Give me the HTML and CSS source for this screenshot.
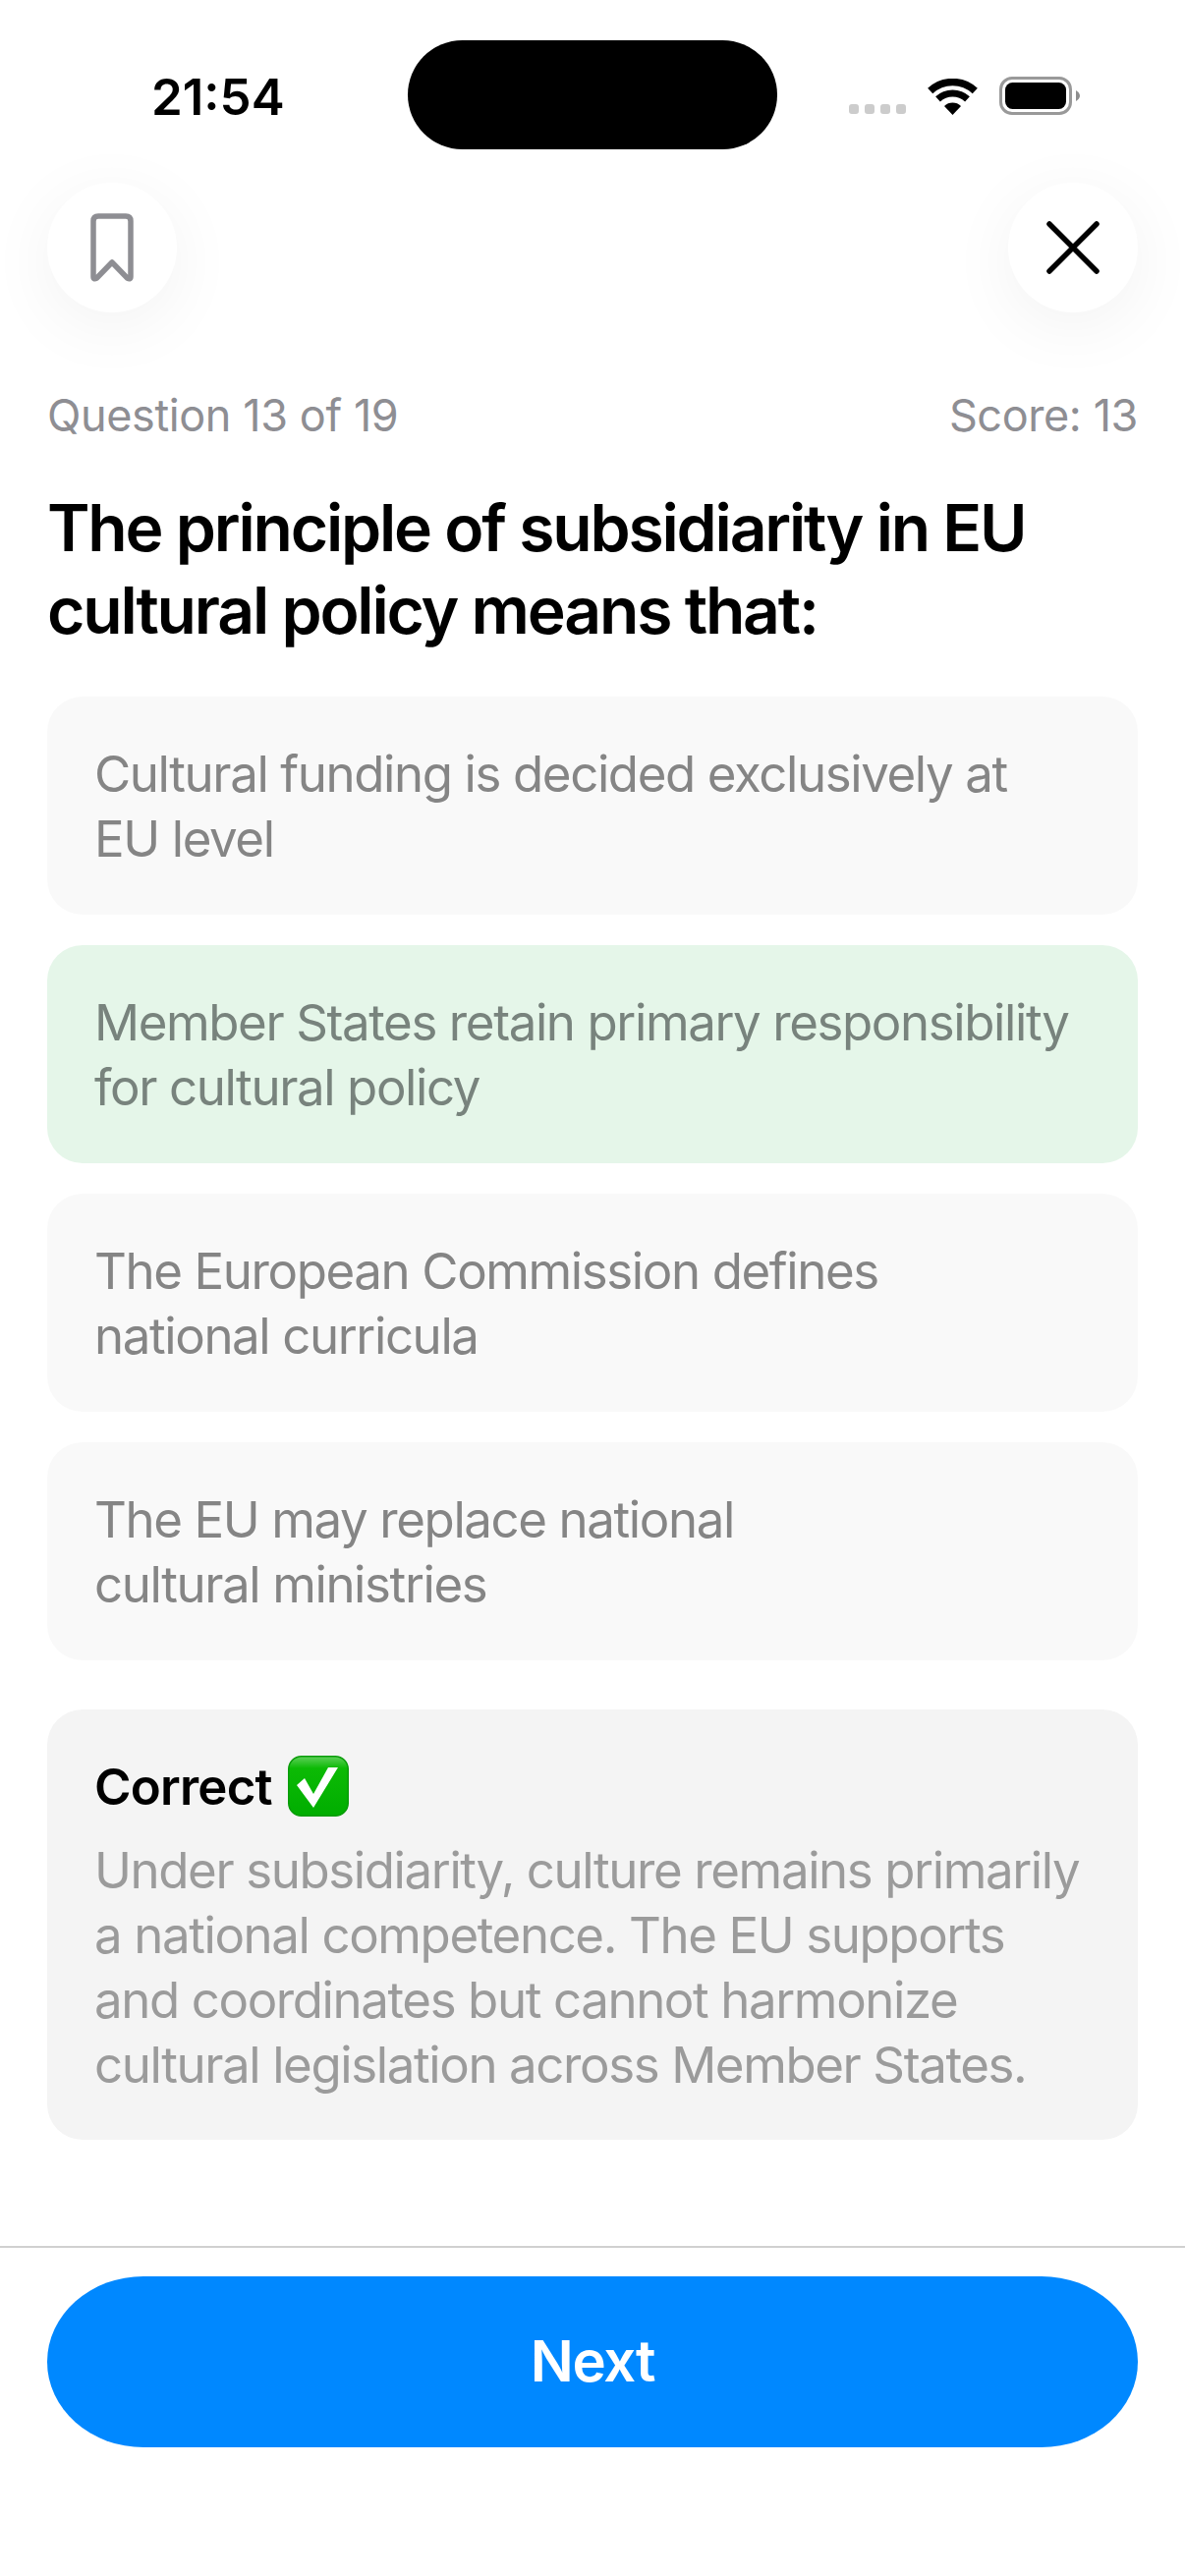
FILE: index.html
```html
<!DOCTYPE html>
<html lang="en">
<head>
    <meta charset="UTF-8">
    <meta name="viewport" content="width=device-width, initial-scale=1.0">
    <title>Quiz</title>
    <link rel="stylesheet" href="styles.css">
</head>
<body>
    <div class="screen">
        <div class="status-bar">
            <span class="time">21:54</span>
            <div class="island"></div>
            <div class="status-icons">
                <div class="signal"><i></i><i></i><i></i><i></i></div>
                <svg class="wifi" width="51" height="37" viewBox="0 0 51 37">
                    <path d="M2.7 12.5A33.5 33.5 0 0 1 48.3 12.5" fill="none" stroke="#000" stroke-width="7.5"/>
                    <path d="M10.500 20.9A22 22 0 0 1 40.500 20.9" fill="none" stroke="#000" stroke-width="7"/>
                    <path d="M25.5 37L17 27.9A12.5 12.5 0 0 1 34 27.9Z" fill="#000"/>
                </svg>
                <svg class="battery" width="82" height="39" viewBox="0 0 82 39">
                    <rect x="1.5" y="1.5" width="71" height="36" rx="11.5" fill="none" stroke="#999" stroke-width="3"/>
                    <rect x="6" y="6" width="62" height="27" rx="7.5" fill="#000"/>
                    <path d="M78 14C80.5 15.500 82 17.500 82 19.500C82 21.500 80.500 23.500 78 25Z" fill="#8e8e8e"/>
                </svg>
            </div>
        </div>

        <div class="top-actions">
            <button class="round-btn">
                <svg width="44" height="70" viewBox="0 0 44 70">
                    <path d="M3 64.5V8Q3 3 8 3H36Q41 3 41 8V64.5Q41 68 37.500 66L22 50L6.500 66Q3 68 3 64.500Z" fill="none" stroke="#8e8e93" stroke-width="5.500" stroke-linejoin="round"/>
                </svg>
            </button>
            <button class="round-btn">
                <svg width="54" height="54" viewBox="0 0 54 54">
                    <path d="M3 3L51 51M51 3L3 51" fill="none" stroke="#000" stroke-width="5.500" stroke-linecap="round"/>
                </svg>
            </button>
        </div>

        <div class="quiz">
            <div class="meta">
                <span>Question 13 of 19</span>
                <span>Score: 13</span>
            </div>
            <h1 class="question">The principle of subsidiarity in EU<br>cultural policy means that:</h1>

            <div class="options">
                <div class="option">Cultural funding is decided exclusively at<br>EU level</div>
                <div class="option correct">Member States retain primary responsibility<br>for cultural policy</div>
                <div class="option">The European Commission defines<br>national curricula</div>
                <div class="option">The EU may replace national<br>cultural ministries</div>
            </div>

            <div class="feedback">
                <div class="feedback-title">
                    Correct
                    <svg width="62" height="62" viewBox="0 0 62 62">
                        <defs>
                            <linearGradient id="emoji-green" x1="0" y1="0" x2="0" y2="1">
                                <stop offset="0" stop-color="#5fd05a"/>
                                <stop offset="0.2" stop-color="#0cba05"/>
                                <stop offset="1" stop-color="#00ad00"/>
                            </linearGradient>
                        </defs>
                        <rect x="0.75" y="0.75" width="60.5" height="60.5" rx="13" fill="url(#emoji-green)" stroke="#0a9c0a" stroke-width="1.5"/>
                        <path d="M9 30L17 23L26 39L41 12H51L26 53Z" fill="#fff"/>
                    </svg>
                </div>
                <p class="feedback-text">Under subsidiarity, culture remains primarily<br>a national competence. The EU supports<br>and coordinates but cannot harmonize<br>cultural legislation across Member States.</p>
            </div>
        </div>

        <div class="footer">
            <button class="next-btn">Next</button>
        </div>
    </div>
</body>
</html>
```

FILE: styles.css
```css
* {
    box-sizing: border-box;
}

body {
    margin: 0;
    padding: 0;
    background: #fff;
    font-family: Inter, "Noto Sans", sans-serif;
}

.screen {
    width: 1206px;
    height: 2622px;
    display: flex;
    flex-direction: column;
    overflow: hidden;
}

/* Status bar */
.status-bar {
    height: 186px;
    display: flex;
    align-items: flex-start;
    padding: 41px 106px 0 154px;
}

.time {
    width: 261px;
    margin-top: 28px;
    font-size: 51px;
    line-height: 60px;
    font-weight: 600;
    color: #000;
}

.island {
    width: 376px;
    height: 111px;
    border-radius: 56px;
    background: #000;
}

.status-icons {
    display: flex;
    align-items: flex-end;
    margin-left: 73px;
    margin-top: 37px;
}

.signal {
    display: flex;
    gap: 6px;
    margin-bottom: 1px;
}

.signal i {
    width: 10px;
    height: 10px;
    border-radius: 3px;
    background: #ccc;
}

.wifi {
    margin-left: 22px;
}

.battery {
    margin-left: 22px;
}

/* Bookmark and close */
.top-actions {
    display: flex;
    justify-content: space-between;
    padding: 0 48px;
}

.round-btn {
    width: 132px;
    height: 132px;
    padding: 0;
    border: none;
    border-radius: 50%;
    background: #fff;
    box-shadow: 0 14px 70px rgba(0, 0, 0, 0.055);
    display: flex;
    justify-content: center;
    align-items: center;
}

.quiz {
    flex: 1;
    padding: 0 48px;
}

.meta {
    display: flex;
    justify-content: space-between;
    margin-top: 78px;
    font-size: 45px;
    line-height: 54px;
    letter-spacing: -0.4px;
    color: #8e8e93;
}

.question {
    margin: 45px 0 46px;
    font-size: 66px;
    line-height: 84px;
    font-weight: 600;
    letter-spacing: -2.2px;
    color: #000;
}

.options {
    display: flex;
    flex-direction: column;
    gap: 31px;
}

.option {
    height: 222px;
    padding: 46px 48px;
    border-radius: 36px;
    background: #f9f9f9;
    font-size: 51px;
    line-height: 66px;
    letter-spacing: -1.4px;
    white-space: nowrap;
    color: #858585;
}

.option.correct {
    background: #e5f6e9;
    color: #78837d;
}

.feedback {
    height: 438px;
    margin-top: 50px;
    padding: 45px 48px;
    border-radius: 36px;
    background: #f4f4f4;
}

.feedback-title {
    display: flex;
    align-items: center;
    gap: 16px;
    height: 66px;
    font-size: 51px;
    font-weight: 600;
    letter-spacing: -0.8px;
    color: #000;
}

.feedback-text {
    margin: 20px 0 0;
    font-size: 51px;
    line-height: 66px;
    letter-spacing: -1.4px;
    white-space: nowrap;
    color: #9b9b9b;
}

/* Bottom button */
.footer {
    height: 336px;
    padding: 29px 48px 0;
    border-top: 2px solid #d0d0d0;
}

.next-btn {
    width: 100%;
    height: 174px;
    padding: 0 0 2px;
    border: none;
    border-radius: 98px / 87px;
    background: #0088ff;
    font-family: inherit;
    font-size: 58px;
    font-weight: 600;
    letter-spacing: -1.2px;
    color: #fff;
}
```
